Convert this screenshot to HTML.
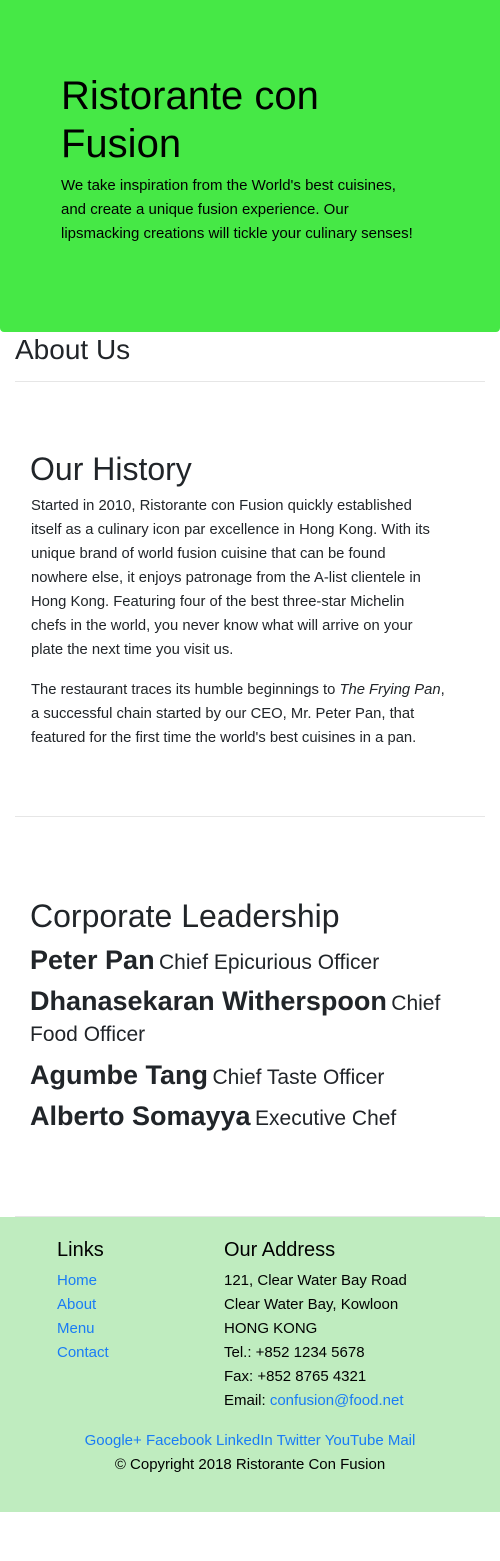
<!DOCTYPE html>
<html><head><meta charset="utf-8"><style>
body{margin:0;width:500px;height:1561px;position:relative;font-family:"Liberation Sans",sans-serif;color:#212529;background:#fff;overflow:hidden}
.a{position:absolute;white-space:nowrap}
.jb{position:absolute;left:0;top:0;width:500px;height:332px;background:#46e846;border-radius:0 0 4px 4px}
.p{font-size:15px;line-height:24px}
.hr{position:absolute;left:15px;width:470px;height:1px;background:#e6e6e6}
.ft{position:absolute;left:0;top:1217px;width:500px;height:295px;background:#bfecbf}
a{color:#1a7cf5;text-decoration:none}
.ld{font-size:27px;font-weight:bold}
.sm{font-size:21px;font-weight:normal}
</style></head><body>
<div class="jb"></div>
<div class="a" style="left:61px;top:72px;font-size:40px;line-height:48px;color:#000">Ristorante con<br>Fusion</div>
<div class="a p" style="left:61px;top:174px;color:#000;font-size:15px">We take inspiration from the World's best cuisines,<br>and create a unique fusion experience. Our<br>lipsmacking creations will tickle your culinary senses!</div>
<div class="a" style="left:15px;top:333px;font-size:28px;line-height:34px">About Us</div>
<div class="hr" style="top:381px"></div>
<div class="a" style="left:30px;top:449px;font-size:32px;line-height:40px">Our History</div>
<div class="a p" style="left:31px;top:494px;font-size:14.8px">Started in 2010, Ristorante con Fusion quickly established<br>itself as a culinary icon par excellence in Hong Kong. With its<br>unique brand of world fusion cuisine that can be found<br>nowhere else, it enjoys patronage from the A-list clientele in<br>Hong Kong. Featuring four of the best three-star Michelin<br>chefs in the world, you never know what will arrive on your<br>plate the next time you visit us.</div>
<div class="a p" style="left:31px;top:678px;font-size:14.8px">The restaurant traces its humble beginnings to <i>The Frying Pan</i>,<br>a successful chain started by our CEO, Mr. Peter Pan, that<br>featured for the first time the world's best cuisines in a pan.</div>
<div class="hr" style="top:816px"></div>
<div class="a" style="left:30px;top:896px;font-size:32px;line-height:40px">Corporate Leadership</div>
<div class="a" style="left:30px;top:942px;line-height:36px"><span class="ld">Peter Pan</span> <span class="sm">Chief Epicurious Officer</span></div>
<div class="a" style="left:30px;top:983px;line-height:36px"><span class="ld">Dhanasekaran Witherspoon</span> <span class="sm">Chief</span></div>
<div class="a" style="left:30px;top:1017px;line-height:36px"><span class="sm">Food Officer</span></div>
<div class="a" style="left:30px;top:1057px;line-height:36px"><span class="ld">Agumbe Tang</span> <span class="sm">Chief Taste Officer</span></div>
<div class="a" style="left:30px;top:1098px;line-height:36px"><span class="ld">Alberto Somayya</span> <span class="sm">Executive Chef</span></div>
<div class="hr" style="top:1216px"></div>
<div class="ft"></div>
<div class="a" style="left:57px;top:1238px;font-size:20px;line-height:24px;color:#000">Links</div>
<div class="a p" style="left:57px;top:1269px"><a>Home</a><br><a>About</a><br><a>Menu</a><br><a>Contact</a></div>
<div class="a" style="left:224px;top:1238px;font-size:20px;line-height:24px;color:#000">Our Address</div>
<div class="a p" style="left:224px;top:1269px;color:#000;font-size:15px">121, Clear Water Bay Road<br>Clear Water Bay, Kowloon<br>HONG KONG<br>Tel.: +852 1234 5678<br>Fax: +852 8765 4321<br>Email: <a>confusion@food.net</a></div>
<div class="a p" style="left:0;width:500px;text-align:center;top:1429px;font-size:15px"><a>Google+</a> <a>Facebook</a> <a>LinkedIn</a> <a>Twitter</a> <a>YouTube</a> <a>Mail</a></div>
<div class="a p" style="left:0;width:500px;text-align:center;top:1453px;color:#000;font-size:15px">© Copyright 2018 Ristorante Con Fusion</div>
</body></html>
